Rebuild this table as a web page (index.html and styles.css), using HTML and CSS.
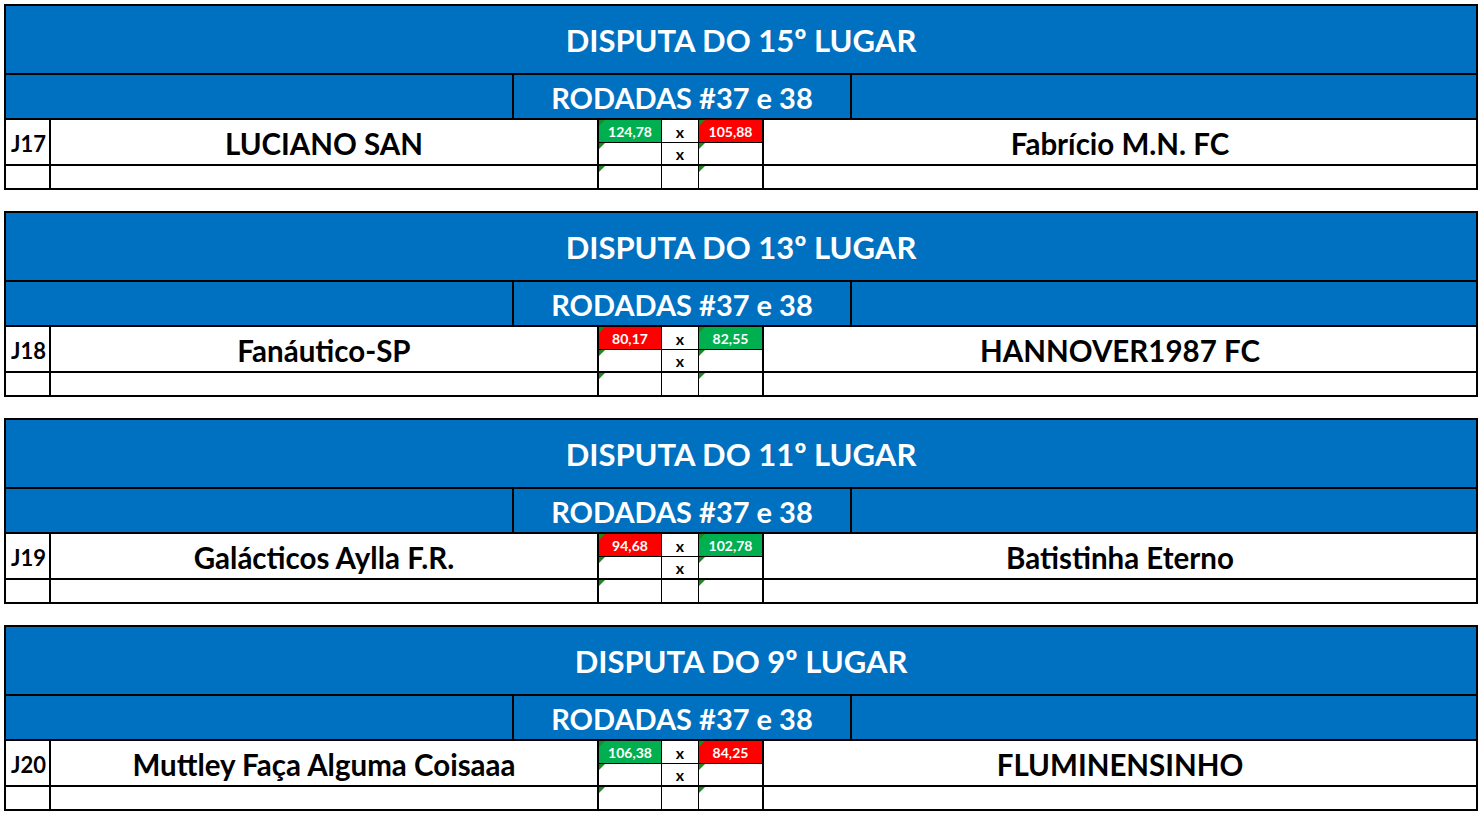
FILE: index.html
```html
<!DOCTYPE html>
<html lang="pt-BR">
<head>
<meta charset="utf-8">
<title>Disputas</title>
<link rel="stylesheet" href="styles.css">
</head>
<body>

<section class="block">
  <div class="title">DISPUTA DO 15º LUGAR</div>
  <div class="sub"><div></div><div class="sub-mid">RODADAS #37 e 38</div><div></div></div>
  <div class="grid">
    <div class="j span">J17</div>
    <div class="name span">LUCIANO SAN</div>
    <div class="s r1 win">124,78</div>
    <div class="x r1">x</div>
    <div class="s r1 lose">105,88</div>
    <div class="name2 span">Fabrício M.N. FC</div>
    <div class="s r2"></div>
    <div class="x r2">x</div>
    <div class="s r2"></div>
    <div class="j"></div>
    <div class="name"></div>
    <div class="s"></div>
    <div class="x"></div>
    <div class="s"></div>
    <div class="name2"></div>
  </div>
</section>

<section class="block">
  <div class="title">DISPUTA DO 13º LUGAR</div>
  <div class="sub"><div></div><div class="sub-mid">RODADAS #37 e 38</div><div></div></div>
  <div class="grid">
    <div class="j span">J18</div>
    <div class="name span">Fanáutico-SP</div>
    <div class="s r1 lose">80,17</div>
    <div class="x r1">x</div>
    <div class="s r1 win">82,55</div>
    <div class="name2 span">HANNOVER1987 FC</div>
    <div class="s r2"></div>
    <div class="x r2">x</div>
    <div class="s r2"></div>
    <div class="j"></div>
    <div class="name"></div>
    <div class="s"></div>
    <div class="x"></div>
    <div class="s"></div>
    <div class="name2"></div>
  </div>
</section>

<section class="block">
  <div class="title">DISPUTA DO 11º LUGAR</div>
  <div class="sub"><div></div><div class="sub-mid">RODADAS #37 e 38</div><div></div></div>
  <div class="grid">
    <div class="j span">J19</div>
    <div class="name span">Galácticos Aylla F.R.</div>
    <div class="s r1 lose">94,68</div>
    <div class="x r1">x</div>
    <div class="s r1 win">102,78</div>
    <div class="name2 span">Batistinha Eterno</div>
    <div class="s r2"></div>
    <div class="x r2">x</div>
    <div class="s r2"></div>
    <div class="j"></div>
    <div class="name"></div>
    <div class="s"></div>
    <div class="x"></div>
    <div class="s"></div>
    <div class="name2"></div>
  </div>
</section>

<section class="block">
  <div class="title">DISPUTA DO 9º LUGAR</div>
  <div class="sub"><div></div><div class="sub-mid">RODADAS #37 e 38</div><div></div></div>
  <div class="grid">
    <div class="j span">J20</div>
    <div class="name span">Muttley Faça Alguma Coisaaa</div>
    <div class="s r1 win">106,38</div>
    <div class="x r1">x</div>
    <div class="s r1 lose">84,25</div>
    <div class="name2 span">FLUMINENSINHO</div>
    <div class="s r2"></div>
    <div class="x r2">x</div>
    <div class="s r2"></div>
    <div class="j"></div>
    <div class="name"></div>
    <div class="s"></div>
    <div class="x"></div>
    <div class="s"></div>
    <div class="name2"></div>
  </div>
</section>

</body>
</html>
```

FILE: styles.css
```css
* { box-sizing: border-box; }

html, body {
  margin: 0;
  background: #ffffff;
}

body {
  padding: 4px;
  font-family: Lato, "Liberation Sans", sans-serif;
  font-weight: 700;
  color: #000;
}

.block {
  width: 1474px;
  border: 2px solid #000;
  margin-bottom: 21px;
}

.title {
  height: 69px;
  background: #0070c0;
  border-bottom: 2px solid #000;
  color: #fff;
  font-size: 31px;
  display: flex;
  align-items: center;
  justify-content: center;
  padding-top: 1px;
  white-space: nowrap;
}

.sub {
  height: 45px;
  background: #0070c0;
  border-bottom: 2px solid #000;
  display: grid;
  grid-template-columns: 506px 340px 1fr;
}

.sub-mid {
  border-left: 2px solid #000;
  border-right: 2px solid #000;
  color: #fff;
  font-size: 29px;
  display: flex;
  align-items: center;
  justify-content: center;
  padding-top: 1px;
  white-space: nowrap;
}

.grid {
  display: grid;
  grid-template-columns: 45px 548px 63px 37px 65px 1fr;
  grid-template-rows: 23px 23px 22px;
}

.grid > div {
  display: flex;
  align-items: center;
  justify-content: center;
  position: relative;
  white-space: nowrap;
}

.j {
  border-right: 2px solid #000;
  justify-content: flex-start !important;
  padding-left: 5px;
  font-size: 22px;
}

.name {
  border-right: 2px solid #000;
  font-size: 29.5px;
}

.name2 {
  font-size: 29.5px;
}

.span {
  grid-row: span 2;
  border-bottom: 2px solid #000;
  padding-top: 3px;
}

.s {
  border-right: 1px solid #000;
  color: #fff;
  font-size: 14px;
}

.s + .x + .s {
  border-right: 2px solid #000;
}

.x {
  border-right: 1px solid #000;
  font-size: 16px;
}

.r1 {
  border-bottom: 1px solid #000;
}

.r2 {
  border-bottom: 2px solid #000;
}

.win { background: #00b050; }
.lose { background: #ff0000; }

.s::before {
  content: "";
  position: absolute;
  left: 0;
  top: 0;
  width: 0;
  height: 0;
  border-top: 6px solid #1e8a1e;
  border-right: 6px solid transparent;
}
```
